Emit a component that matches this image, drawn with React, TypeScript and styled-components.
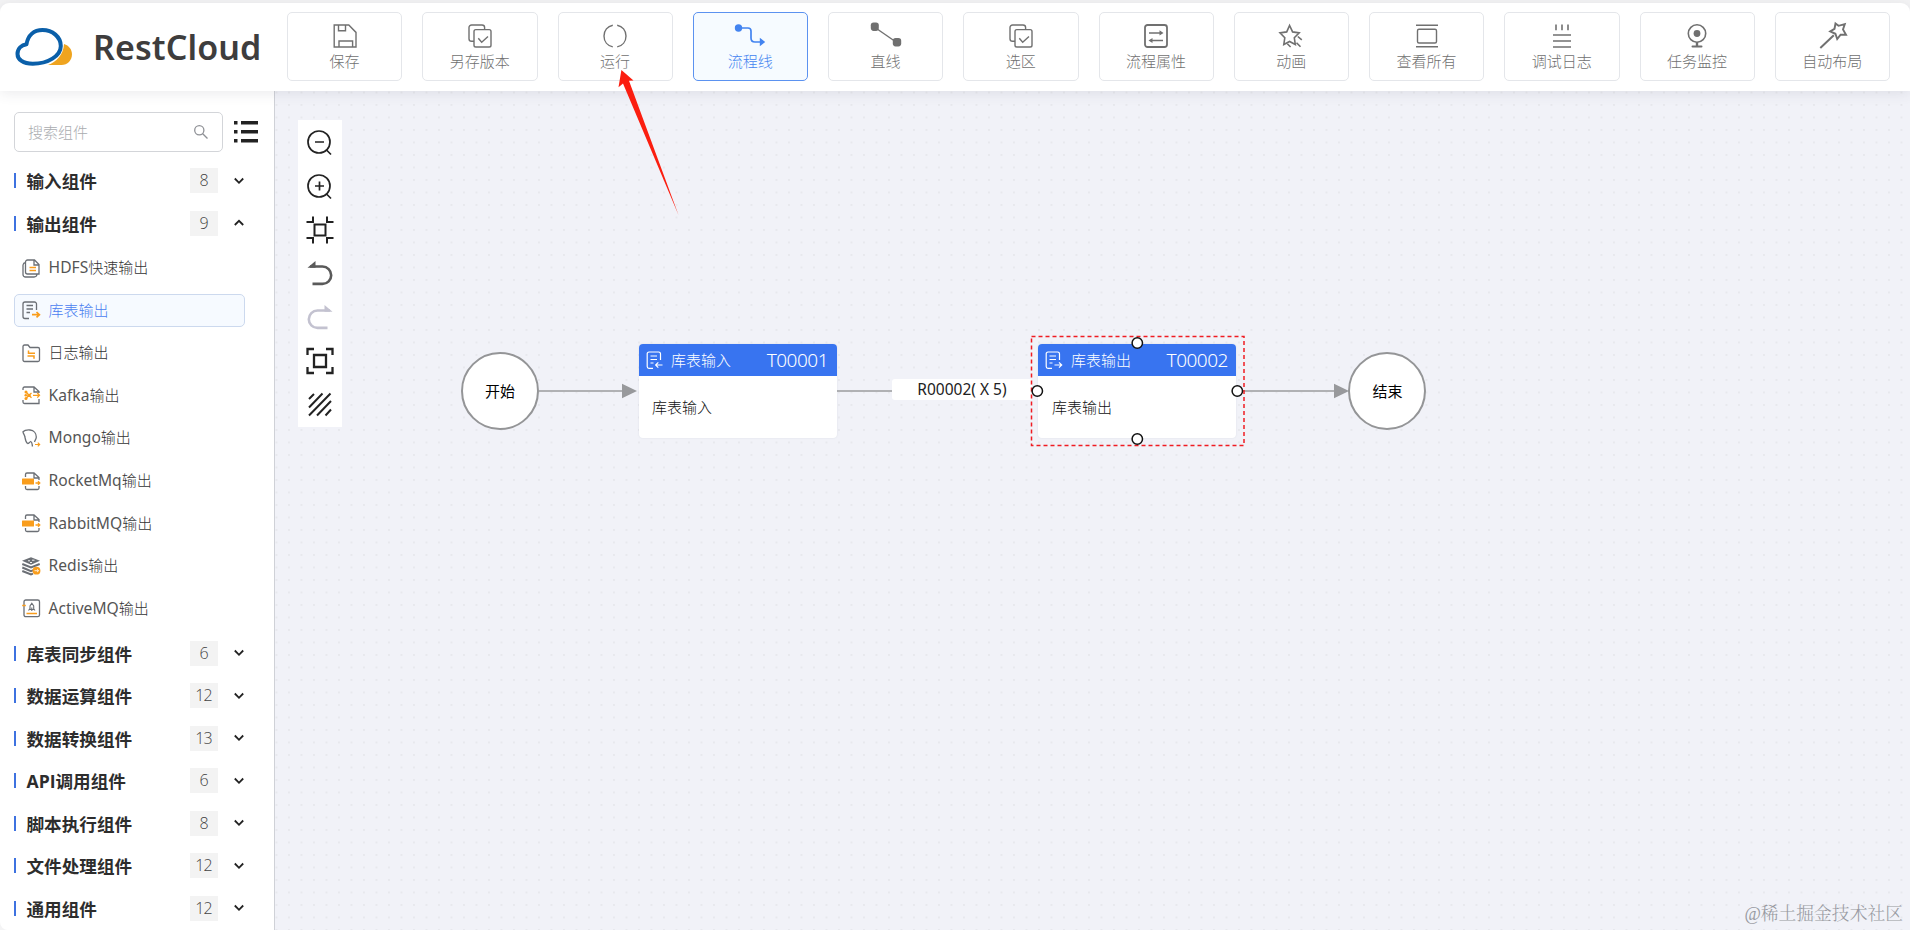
import React from "react";
import styled, { createGlobalStyle } from "styled-components";

const GlobalStyle = createGlobalStyle`
  * { box-sizing: border-box; }
  body {
    margin: 0;
    background: #f4f4f5;
    font-family: "Open Sans", "Noto Sans CJK SC", sans-serif;
    overflow: hidden;
  }
  svg { display: block; flex: none; }
`;

const Page = styled.div`
  width: 1910px;
  height: 930px;
  padding-top: 3px;
  display: flex;
  flex-direction: column;
  position: relative;
  overflow: hidden;
`;

const Header = styled.header`
  height: 88px;
  flex: none;
  display: flex;
  align-items: flex-start;
  padding: 9px 20px 0 15px;
  background: #fff;
  border-radius: 9px 9px 0 0;
  box-shadow: 0 2px 14px rgba(60, 64, 80, 0.11);
  position: relative;
  z-index: 2;
`;

const Brand = styled.div`
  width: 272px;
  flex: none;
  display: flex;
  align-items: center;
  height: 69px;
  gap: 20px;
`;

const BrandName = styled.span`
  font-family: "Noto Sans", sans-serif;
  font-weight: 600;
  font-size: 34px;
  line-height: 40px;
  letter-spacing: 0.1px;
  color: #3e3d3d;
`;

const Toolbar = styled.nav`
  flex: 1;
  display: flex;
  gap: 20px;
`;

const ToolButton = styled.button<{ $active?: boolean }>`
  flex: 1 1 0;
  height: 69px;
  padding: 11px 0 0;
  margin: 0;
  display: flex;
  flex-direction: column;
  align-items: center;
  gap: 2px;
  border: 1px solid ${(p) => (p.$active ? "#5b92f0" : "#e4e6ea")};
  border-radius: 5px;
  background: ${(p) => (p.$active ? "#f6fbff" : "#fff")};
  color: ${(p) => (p.$active ? "#4384f0" : "#707070")};
  font-family: inherit;
  font-size: 15px;
  font-weight: 300;
  line-height: 22px;
  white-space: nowrap;
`;

const Main = styled.div`
  flex: 1;
  display: flex;
  min-height: 0;
`;

const Sidebar = styled.aside`
  width: 275px;
  flex: none;
  background: #fff;
  border-right: 1px solid #cfd1d7;
  border-bottom-left-radius: 8px;
  padding: 21px 0 0 14px;
`;

const SearchRow = styled.div`
  display: flex;
  align-items: center;
  gap: 11px;
  height: 40px;
  margin-bottom: 7.3px;
`;

const SearchBox = styled.div`
  width: 209px;
  height: 40px;
  border: 1px solid #d3d5d9;
  border-radius: 5px;
  display: flex;
  align-items: center;
  justify-content: space-between;
  padding: 0 14px;
  font-size: 15px;
  font-weight: 300;
  color: #a9abaf;
`;

const Placeholder = styled.span`
  margin-left: -1px;
  padding-bottom: 2px;
`;

const Group = styled.div`
  height: 42.5px;
  display: flex;
  align-items: center;
`;

const Marker = styled.i`
  width: 2px;
  height: 15px;
  background: #3e72e0;
  margin-right: 10.5px;
`;

const GroupName = styled.span`
  width: 163px;
  font-size: 17.6px;
  font-weight: 700;
  line-height: 24px;
  padding-top: 1px;
  color: #2d2d2d;
  white-space: nowrap;
`;

const Count = styled.span`
  width: 28px;
  height: 25px;
  background: #f3f3f3;
  color: #444;
  font-size: 16px;
  font-weight: 300;
  line-height: 25px;
  text-align: center;
  margin-right: 16px;
  letter-spacing: -0.9px;
`;

const ItemList = styled.div`
  padding: 2px 0 2.2px;
`;

const Slot = styled.div`
  height: 42.6px;
  display: flex;
  align-items: center;
`;

const Item = styled.div<{ $active?: boolean }>`
  width: 231px;
  height: 33px;
  display: flex;
  align-items: center;
  gap: 8.6px;
  padding-left: 7px;
  border: 1px solid ${(p) => (p.$active ? "#ccd9ee" : "transparent")};
  border-radius: 5px;
  background: ${(p) => (p.$active ? "#f6faff" : "transparent")};
  color: ${(p) => (p.$active ? "#4a80f0" : "#333")};
  font-size: 15px;
  font-weight: 300;
  white-space: nowrap;
`;

const ItemText = styled.span`
  font-family: "Noto Sans", "Noto Sans CJK SC", sans-serif;
  line-height: 22px;
  padding-bottom: 1px;
`;

const Latin = styled.span`
  font-weight: 400;
  font-size: 15.6px;
  color: #555;
`;

const Canvas = styled.main`
  flex: 1;
  position: relative;
  background-color: #f1f2f8;
  background-image: radial-gradient(circle at 1px 1px, #e7e8ed 0.9px, transparent 1.2px);
  background-size: 12.5px 12.5px;
  background-position: 0.5px 0.5px;
`;

const ZoomPanel = styled.div`
  position: absolute;
  left: 23px;
  top: 29px;
  width: 43.5px;
  height: 307px;
  padding-top: 1px;
  background: #fff;
  display: flex;
  flex-direction: column;
  align-items: center;
  justify-content: space-around;
`;

const Edges = styled.svg`
  position: absolute;
  left: 0;
  top: 0;
`;

const Terminal = styled.div<{ $x: number }>`
  position: absolute;
  left: ${(p) => p.$x}px;
  top: 261px;
  width: 78px;
  height: 78px;
  padding-bottom: 1px;
  border-radius: 50%;
  border: 2.5px solid #949597;
  background: #fff;
  display: flex;
  align-items: center;
  justify-content: center;
  font-size: 15px;
  color: #000;
`;

const Node = styled.div<{ $x: number }>`
  position: absolute;
  left: ${(p) => p.$x}px;
  top: 253px;
  width: 198px;
  height: 94px;
  border-radius: 4px;
  background: #fff;
  overflow: hidden;
  box-shadow: 0 0 2px rgba(80, 90, 120, 0.12);
`;

const NodeHead = styled.div`
  height: 32px;
  background: #3874f0;
  color: #fff;
  display: flex;
  align-items: center;
  padding: 0 8.5px 0 7px;
  font-size: 15px;
  font-weight: 300;
`;

const NodeTitle = styled.span`
  margin-left: 7.5px;
  padding-bottom: 1px;
  flex: 1;
  white-space: nowrap;
`;

const NodeId = styled.span`
  font-family: "Noto Sans", sans-serif;
  font-size: 19px;
  font-weight: 300;
  letter-spacing: -0.5px;
  padding-bottom: 1px;
`;

const NodeBody = styled.div`
  padding: 20px 13.5px;
  font-size: 15px;
  line-height: 22px;
  font-weight: 300;
  color: #111;
`;

const EdgeLabel = styled.div`
  position: absolute;
  left: 617px;
  top: 288px;
  width: 140px;
  height: 21px;
  border-radius: 3px;
  background: #fff;
  color: #222;
  font-family: "Noto Sans", sans-serif;
  font-size: 15.5px;
  line-height: 20px;
  text-align: center;
  white-space: pre;
`;

const Selection = styled.svg`
  position: absolute;
  left: 750px;
  top: 240px;
`;

const Pointer = styled.svg`
  position: absolute;
  left: 610px;
  top: 64px;
  z-index: 5;
`;

const Watermark = styled.div`
  position: absolute;
  right: 7px;
  bottom: 3px;
  font-family: "Liberation Serif", "Noto Serif CJK SC", "Noto Sans CJK SC", serif;
  font-size: 17.8px;
  line-height: 26px;
  font-weight: 300;
  color: #989aa1;
  z-index: 3;
  white-space: nowrap;
`;

const copyIcon = (
  <>
    <path d="M6 17.3H3.6A2.6 2.6 0 0 1 1 14.7V3.6A2.6 2.6 0 0 1 3.6 1H14a2.6 2.6 0 0 1 2.6 2.6V5" />
    <rect x="6" y="5.6" width="17" height="17.4" rx="1.8" />
    <path d="M10.3 14.2l3.4 4 6.3-5.6" />
  </>
);

const tools: { label: string; icon: React.ReactNode; active?: boolean }[] = [
  {
    label: "保存",
    icon: <path d="M1.2 1h14.6l7.2 7.4V23H1.2zM5.5 1v5.8h7V1M6 23v-6h13.6v6" />,
  },
  { label: "另存版本", icon: copyIcon },
  {
    label: "运行",
    icon: <path d="M9.8 1.2C4.5 2.2 1 6.5 1 12s3.5 9.8 8.8 10.9M14.2 1.2C19.5 2.2 23 6.5 23 12s-3.5 9.8-8.8 10.9" />,
  },
  {
    label: "流程线",
    active: true,
    icon: (
      <>
        <circle cx="0.5" cy="4" r="3.7" fill="currentColor" stroke="none" />
        <path d="M1 4h9c2 0 3 1 3 3v7c0 3 1 4 4 4h6" strokeWidth="1.7" />
        <path d="M21.8 13.8l5.4 4.2-5.4 4.2z" fill="currentColor" stroke="none" />
      </>
    ),
  },
  {
    label: "直线",
    icon: (
      <>
        <rect x="-3.2" y="-1.5" width="8" height="8.4" rx="2.8" fill="currentColor" stroke="none" />
        <rect x="18.8" y="14" width="8.4" height="8.4" rx="2.8" fill="currentColor" stroke="none" />
        <path d="M1 3.5l21 14.5" />
      </>
    ),
  },
  { label: "选区", icon: copyIcon },
  {
    label: "流程属性",
    icon: (
      <>
        <rect x="1" y="1" width="22" height="22" rx="2.5" strokeWidth="1.8" />
        <path d="M5 9h13M6.5 16.5H19" />
        <path d="M15.5 6.3L19.5 9l-4 2.6zM8.5 14L4.5 16.5l4 2.6z" fill="currentColor" stroke="none" />
      </>
    ),
  },
  {
    label: "动画",
    icon: (
      <>
        <path d="M10.6 1.5l3 6.4 6.6 1-4.9 4.9 1 6.7-5.7-3-5.8 3 1-6.7L1 8.9l6.7-1z" strokeWidth="1.6" />
        <path d="M18.8 12.5l4 3.3M17.5 18.7l4 4.1M8.3 19.8l3.3 3.2" strokeWidth="1.6" />
      </>
    ),
  },
  {
    label: "查看所有",
    icon: (
      <>
        <path d="M1 1.2h22M1 22.8h22" />
        <rect x="2.5" y="5.2" width="19" height="13.8" rx="1.5" />
      </>
    ),
  },
  {
    label: "调试日志",
    icon: <path d="M6 .5v5.8M12 .5v5.8M18 .5v5.8M3 11h18M3 17h18M3 23h18" strokeWidth="1.6" />,
  },
  {
    label: "任务监控",
    icon: (
      <>
        <circle cx="12" cy="9.5" r="8.7" strokeWidth="1.6" />
        <circle cx="12" cy="9.5" r="3.4" fill="currentColor" stroke="none" />
        <path d="M12 18v4.5" strokeWidth="2.4" />
        <path d="M7.5 22.5h9" strokeWidth="2" strokeLinecap="round" />
      </>
    ),
  },
  {
    label: "自动布局",
    icon: (
      <>
        <path d="M15.5-.5l3 2.3 6.3-1.6-1.8 5.3 3 5.2-5.4-.1-3.4 4.4-1.8-5.2-5.2-2.4 4.3-2.6z" strokeWidth="1.9" />
        <path d="M13.8 11.2L.3 24" strokeWidth="2" />
      </>
    ),
  },
];

const G = "#6b6f75";
const O = "#f99d1c";

const HdfsIcon = (
  <>
    <path d="M5.5 1h7L17 5.500V15H5.500a2 2 0 0 1-2-2V3a2 2 0 0 1 2-2zM12 1v5h5M3.500 3.500A3 3 0 0 0 1 6v9.500A2.500 2.500 0 0 0 3.500 18H12a3 3 0 0 0 3-2.500" />
    <path d="M7.500 8.500h6.500M7.500 11.500h6.500" stroke={O} />
  </>
);
const TableOutIcon = (
  <>
    <path d="M14.500 9V3a2 2 0 0 0-2-2H3a2 2 0 0 0-2 2v12.500a2 2 0 0 0 2 2h4M4.500 4.500h6.500M4.500 8h6.500M4.500 11.500h3.500" />
    <path d="M10 13.700h7M14.500 11l2.900 2.700-2.900 2.700" stroke={O} strokeWidth="1.7" />
  </>
);
const LogIcon = (
  <>
    <path d="M1 2.500A1.500 1.500 0 0 1 2.500 1H6l2 2.500h8A1.500 1.500 0 0 1 17.500 5v11a1.500 1.500 0 0 1-1.500 1.500H2.500A1.500 1.500 0 0 1 1 16z" />
    <path d="M13 9.300H6.500V6.500M5.500 12h6.500v2.800" stroke={O} strokeWidth="1.5" />
  </>
);
const KafkaIcon = (
  <>
    <path d="M1 4V2.500A1.500 1.500 0 0 1 2.500 1H12l5 4.500V7M12 1v5h5M1 14v2a1.500 1.500 0 0 0 1.500 1.500H17V13" />
    <path d="M4 6l3 3.300L4 12.500M9.500 7L7 9.300l2.500 2.500M11 9.300h6.500M15.300 7l2.200 2.300-2.200 2.300" stroke={O} strokeWidth="1.3" />
    <g fill={O} stroke="none">
      <circle cx="4" cy="6" r="1.5" />
      <circle cx="4" cy="12.500" r="1.5" />
      <circle cx="3.800" cy="9.300" r="1.300" />
      <circle cx="7" cy="9.300" r="1.600" />
    </g>
  </>
);
const MongoIcon = (
  <>
    <path d="M5.500 14.500C3.500 13 3.300 10 2.800 7.500 2.500 5.500 1 4.500 1 2.800 2.500 1.200 5.500.8 8 1c4 .4 6.300 3.600 6.300 7 0 2-1.300 3-1.800 5M5.500 14.500c1.500 0 2-1.500 3.300-2 1.500.5 1.200 3 1.700 5" />
    <path d="M13 15.500h4.500M15.800 13.700l1.900 1.800-1.900 1.800" stroke={O} strokeWidth="1.1" />
  </>
);
const MqIcon = (
  <>
    <path d="M3.500 5V2.500A1.500 1.500 0 0 1 5 1h7l5 4.500V8M12 1v5h5M3.500 14v2A1.500 1.500 0 0 0 5 17.500h10.500A1.500 1.500 0 0 0 17 16v-2" />
    <rect x="0" y="6.500" width="12" height="6" rx=".5" fill={O} stroke="none" />
    <path d="M13.500 11h4.200M16 9.300l1.800 1.700-1.800 1.700" stroke={O} />
  </>
);
const RedisIcon = (
  <>
    <path d="M9 .3l9 3.500-9 4-9-4z" fill={G} stroke="none" />
    <path d="M.3 7L9 10.500 17.700 7M.3 10.500L9 14.100l3-1.200M.3 14L9 17.500l2-.8" strokeWidth="1.9" />
    <path d="M6 3.800h2M10 3.200h2.500M8 5.500h2" stroke="#fff" strokeWidth=".9" />
    <circle cx="14.500" cy="13.700" r="3.900" fill={O} stroke="none" />
    <path d="M12.500 13.700h4M15 12.300l1.500 1.400-1.500 1.400" stroke="#fff" strokeWidth=".8" />
  </>
);
const ActiveIcon = (
  <>
    <rect x="2" y="1" width="15.500" height="16.700" rx="1.800" />
    <path d="M9.800 4.200L8 7v3.500h3.700V7zM6.500 11.500L8 9.500M13 11.500l-1.500-2M9.800 8.500v3.500" strokeWidth="1.1" />
    <path d="M.2 6.500h3.600M4.500 14.500h10.500" stroke={O} strokeWidth="1.6" />
  </>
);

const outputs: { latin?: string; label: string; icon: React.ReactNode; active?: boolean }[] = [
  { latin: "HDFS", label: "快速输出", icon: HdfsIcon },
  { label: "库表输出", icon: TableOutIcon, active: true },
  { label: "日志输出", icon: LogIcon },
  { latin: "Kafka", label: "输出", icon: KafkaIcon },
  { latin: "Mongo", label: "输出", icon: MongoIcon },
  { latin: "RocketMq", label: "输出", icon: MqIcon },
  { latin: "RabbitMQ", label: "输出", icon: MqIcon },
  { latin: "Redis", label: "输出", icon: RedisIcon },
  { latin: "ActiveMQ", label: "输出", icon: ActiveIcon },
];

const groups: { name: string; count: number; open?: boolean }[] = [
  { name: "输入组件", count: 8 },
  { name: "输出组件", count: 9, open: true },
  { name: "库表同步组件", count: 6 },
  { name: "数据运算组件", count: 12 },
  { name: "数据转换组件", count: 13 },
  { name: "API调用组件", count: 6 },
  { name: "脚本执行组件", count: 8 },
  { name: "文件处理组件", count: 12 },
  { name: "通用组件", count: 12 },
];

const zoomIcons: React.ReactNode[] = [
  <g>
    <circle cx="13" cy="13" r="11" />
    <path d="M9 13h9M20 20.500l5 5" />
  </g>,
  <g>
    <circle cx="13" cy="13" r="11" />
    <path d="M9 13h9M13.500 8.500v9M20 20.500l5 5" />
  </g>,
  <path d="M8.500 8.500h11v11h-11zM.5 6H7V.5M21 .5V6h6.500M.5 22H7v5.500M21 27.500V22h6.500" strokeWidth="2" />,
  <g stroke="#5a5a5a">
    <path d="M4 6.500h12.500a8.700 8.700 0 0 1 0 17.400H6.500" strokeWidth="2.6" />
    <path d="M1.500 7.800L9.500 1v6.800z" fill="#5a5a5a" stroke="none" />
  </g>,
  <g stroke="#c3c2d0">
    <path d="M24 6.500H11.500a8.700 8.700 0 0 0 0 17.400H21.500" strokeWidth="2.6" />
    <path d="M26.500 7.800L18.500 1v6.800z" fill="#c3c2d0" stroke="none" />
  </g>,
  <path d="M8 8h12v12H8zM1.500 8V2H8M20 2h6.500v6M26.500 20v6H20M8 26H1.500v-6" strokeWidth="2.3" />,
  <path d="M3 8l5-5M3 16.500L16.500 2.500M3 24.500L24.500 2.500M11 24.500L25 10M19.500 24.500l5.500-6" strokeWidth="2" />,
];

const Chevron = ({ up }: { up?: boolean }) => (
  <svg width="10" height="8" viewBox="0 0 10 8" fill="none" stroke="#222" strokeWidth="1.8">
    <path d={up ? "M.8 6L5 1.800 9.200 6" : "M.8 1.500L5 5.800 9.200 1.500"} />
  </svg>
);

const NodeIcon = ({ out }: { out?: boolean }) => (
  <svg width="18" height="18" viewBox="0 0 18 18" fill="none" stroke="currentColor" strokeWidth="1.2">
    <path d="M14.500 9V3A1.800 1.800 0 0 0 12.700 1H3a1.800 1.800 0 0 0-1.800 2v12.500a1.800 1.800 0 0 0 1.800 1.800h4M4.500 5h6.500M4.500 8.500h6.500M4.500 12h3" />
    <path d={out ? "M9.500 14h7M14 11.300l2.700 2.700-2.700 2.700" : "M9.500 14h7M12.300 11.300L9.600 14l2.700 2.700"} />
  </svg>
);

export default function App() {
  return (
    <>
      <GlobalStyle />
      <Page>
        <Header>
          <Brand>
            <svg width="58" height="40" viewBox="0 0 58 40">
              <path d="M49 17c5 1.500 8 5.500 8 10.300C57 33.500 52.500 38 46.500 38H33c8-3 15.500-10 16-21z" fill="#efa41f" />
              <path
                d="M11.500 17.200C13 8 19 3 27.500 3c10 0 18.300 7 18.300 16 0 10-13 17.800-28 17.800C8 36.800 2.500 32.500 2.500 27c0-5.300 4-9 9-9.800z"
                fill="#fff"
                stroke="#0a5fa9"
                strokeWidth="4"
                strokeLinejoin="round"
              />
            </svg>
            <BrandName>RestCloud</BrandName>
          </Brand>
          <Toolbar>
            {tools.map((t) => (
              <ToolButton key={t.label} $active={t.active}>
                <svg
                  width="24"
                  height="24"
                  viewBox="0 0 24 24"
                  fill="none"
                  stroke="currentColor"
                  strokeWidth="1.4"
                  overflow="visible"
                >
                  {t.icon}
                </svg>
                <span>{t.label}</span>
              </ToolButton>
            ))}
          </Toolbar>
        </Header>
        <Main>
          <Sidebar>
            <SearchRow>
              <SearchBox>
                <Placeholder>搜索组件</Placeholder>
                <svg width="14" height="14" viewBox="0 0 14 14" fill="none" stroke="#8f9196" strokeWidth="1.3">
                  <circle cx="5.3" cy="5.3" r="4.6" />
                  <path d="M8.700 8.700L13.500 13.500" />
                </svg>
              </SearchBox>
              <svg width="24" height="22" viewBox="0 0 24 22" fill="#222">
                <path d="M0 0h3.500v3.500H0zM7 0h17v3.500H7zM0 9h3.500v3.500H0zM7 9h17v3.500H7zM0 18h3.500v3.500H0zM7 18h17v3.500H7z" />
              </svg>
            </SearchRow>
            {groups.map((g) => (
              <React.Fragment key={g.name}>
                <Group>
                  <Marker />
                  <GroupName>{g.name}</GroupName>
                  <Count>{g.count}</Count>
                  <Chevron up={g.open} />
                </Group>
                {g.open && (
                  <ItemList>
                    {outputs.map((o) => (
                      <Slot key={o.latin || o.label}>
                        <Item $active={o.active}>
                          <svg width="18" height="18" viewBox="0 0 18 18" fill="none" stroke={G} strokeWidth="1.3" overflow="visible">
                            {o.icon}
                          </svg>
                          <ItemText>
                            {o.latin && <Latin>{o.latin}</Latin>}
                            {o.label}
                          </ItemText>
                        </Item>
                      </Slot>
                    ))}
                  </ItemList>
                )}
              </React.Fragment>
            ))}
          </Sidebar>
          <Canvas>
            <ZoomPanel>
              {zoomIcons.map((icon, i) => (
                <svg key={i} width="28" height="28" viewBox="0 0 28 28" fill="none" stroke="#222" strokeWidth="1.7">
                  {icon}
                </svg>
              ))}
            </ZoomPanel>
            <Edges width="1635" height="839" fill="#98999c" stroke="none">
              <path d="M264 299h84v2h-84zM562 299h56v2h-56zM963 299h97v2h-97z" fill="#b0b1b4" />
              <path d="M347 292.700l15 7.300-15 7.300zM1059 292.700l15 7.300-15 7.300z" />
            </Edges>
            <Terminal $x={186}>开始</Terminal>
            <Terminal $x={1073.4}>结束</Terminal>
            <EdgeLabel>R00002( X 5)</EdgeLabel>
            <Node $x={363.5}>
              <NodeHead>
                <NodeIcon />
                <NodeTitle>库表输入</NodeTitle>
                <NodeId>T00001</NodeId>
              </NodeHead>
              <NodeBody>库表输入</NodeBody>
            </Node>
            <Node $x={763.4}>
              <NodeHead>
                <NodeIcon out />
                <NodeTitle>库表输出</NodeTitle>
                <NodeId>T00002</NodeId>
              </NodeHead>
              <NodeBody>库表输出</NodeBody>
            </Node>
            <Selection width="226" height="122" fill="none">
              <rect x="6.5" y="5.5" width="212.5" height="109" stroke="#f01c22" strokeWidth="1.5" strokeDasharray="4 3" />
              <g fill="#fff" stroke="#111" strokeWidth="1.5">
                <circle cx="112.3" cy="12" r="5.2" />
                <circle cx="112.3" cy="108" r="5.2" />
                <circle cx="12.3" cy="60" r="5.2" />
                <circle cx="212.3" cy="60" r="5.2" />
              </g>
            </Selection>
          </Canvas>
        </Main>
        <Pointer width="80" height="160" fill="#fb1e10">
          <path d="M11.400 6l12.100 10.500-4.500.3L68.500 151 13 19.500l-4.500 3.800z" />
        </Pointer>
        <Watermark>@稀土掘金技术社区</Watermark>
      </Page>
    </>
  );
}
